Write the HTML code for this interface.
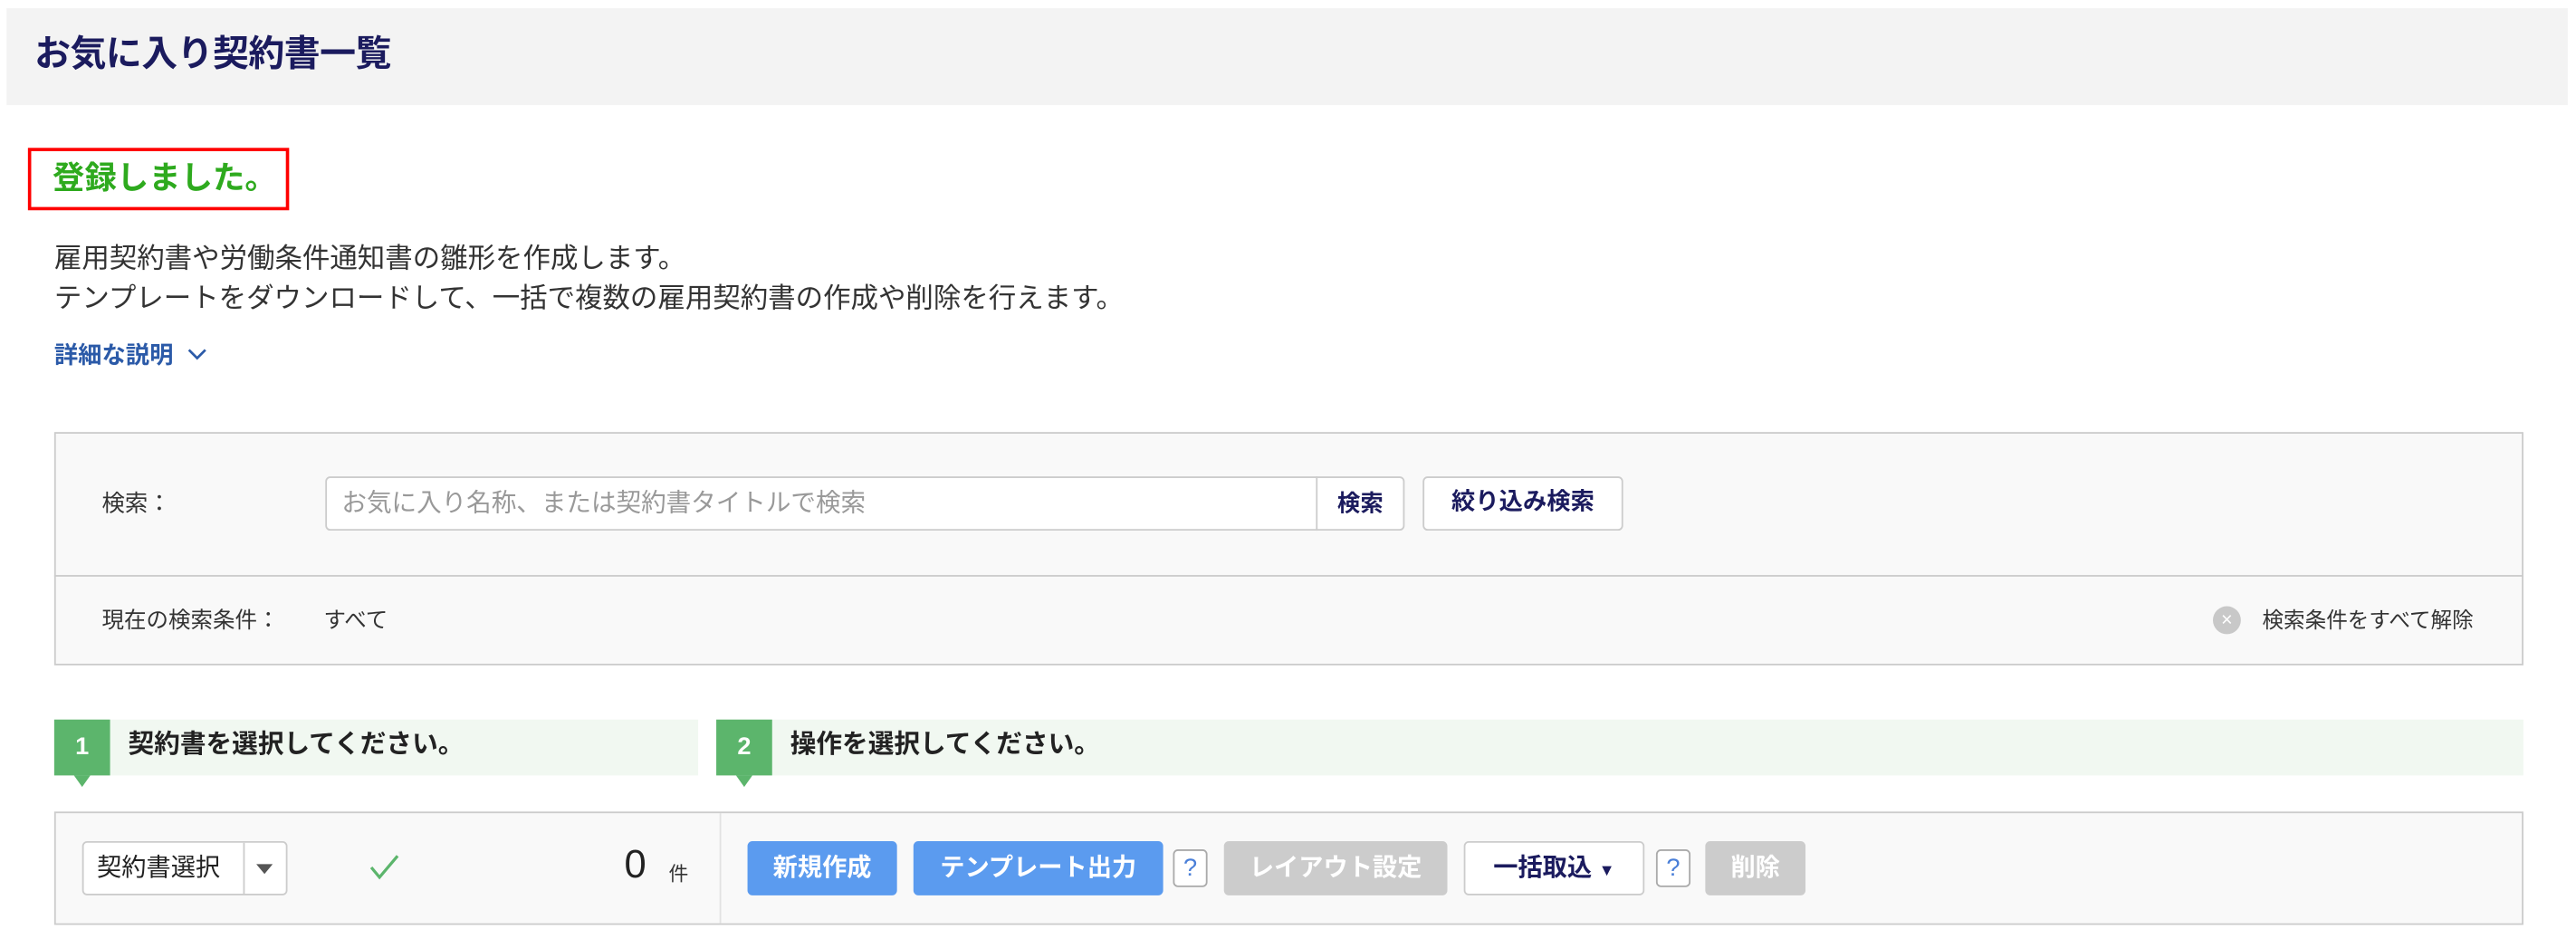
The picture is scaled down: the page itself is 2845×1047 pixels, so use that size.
<!DOCTYPE html>
<html><head><meta charset="utf-8"><style>
html,body{margin:0;padding:0;background:#fff;width:2845px;height:1047px;overflow:hidden}
#w{position:absolute;left:0;top:0;width:1568px;height:577px;transform:scale(1.81441);transform-origin:0 0;font-family:"Liberation Sans","Noto Sans CJK JP",sans-serif;color:#333}
.a{position:absolute;white-space:nowrap}
.btn{position:absolute;top:512px;height:33px;line-height:33px;border-radius:3px;font-size:15px;font-weight:bold;text-align:center;box-sizing:border-box}
.q{position:absolute;top:517px;width:21px;height:23px;border:1px solid #aaa;border-radius:3px;box-sizing:border-box;color:#4a7fd8;font-size:15px;text-align:center;line-height:21px;background:#fff}
</style></head><body><div id="w">
<div class="a" style="left:4px;top:5px;width:1559px;height:59px;background:#f3f3f3"></div>
<div class="a" style="left:21px;top:18px;font-size:22px;font-weight:bold;color:#1b1b5e;line-height:30px;letter-spacing:-0.3px">お気に入り契約書一覧</div>
<div class="a" style="left:17px;top:90px;width:159px;height:38px;border:2.5px solid #f00;box-sizing:border-box"></div>
<div class="a" style="left:32px;top:96px;font-size:19.5px;font-weight:bold;color:#2eaa1e;line-height:26px">登録しました。</div>
<div class="a" style="left:33px;top:146px;font-size:16.8px;line-height:24px;color:#333">雇用契約書や労働条件通知書の雛形を作成します。<br>テンプレートをダウンロードして、一括で複数の雇用契約書の作成や削除を行えます。</div>
<div class="a" style="left:33px;top:207px;font-size:14.5px;font-weight:bold;color:#2b5aa8;line-height:20px">詳細な説明 <svg width="12" height="10" viewBox="0 0 12 10" style="margin-left:4px"><path d="M1 2l5 5 5-5" fill="none" stroke="#2b5aa8" stroke-width="1.5"/></svg></div>

<div class="a" style="left:33px;top:263px;width:1503px;height:142px;background:#f9f9f9;border:1px solid #ccc;box-sizing:border-box"></div>
<div class="a" style="left:33px;top:350px;width:1503px;height:1px;background:#ccc"></div>
<div class="a" style="left:62px;top:297px;font-size:14px;line-height:18px">検索：</div>
<div class="a" style="left:198px;top:290px;width:657px;height:33px;background:#fff;border:1px solid #ccc;border-radius:3px;box-sizing:border-box"></div>
<div class="a" style="left:801px;top:290px;width:1px;height:33px;background:#ccc"></div>
<div class="a" style="left:208px;top:297px;font-size:15.2px;color:#999;line-height:19px">お気に入り名称、または契約書タイトルで検索</div>
<div class="a" style="left:801px;top:297px;width:54px;text-align:center;font-size:14px;font-weight:bold;color:#1b1b5e;line-height:19px">検索</div>
<div class="a" style="left:866px;top:290px;width:122px;height:33px;background:#fff;border:1px solid #ccc;border-radius:3px;box-sizing:border-box;text-align:center;font-size:14.5px;font-weight:bold;color:#1b1b5e;line-height:31px">絞り込み検索</div>
<div class="a" style="left:62px;top:369px;font-size:13.5px;line-height:17px">現在の検索条件：</div>
<div class="a" style="left:197px;top:369px;font-size:13.5px;line-height:17px">すべて</div>
<div class="a" style="left:1347px;top:369px;width:17px;height:17px;border-radius:50%;background:#c8c8c8;color:#fff;font-size:12px;text-align:center;line-height:17px">×</div>
<div class="a" style="left:1377px;top:369px;font-size:13px;line-height:17px">検索条件をすべて解除</div>

<div class="a" style="left:33px;top:438px;width:392px;height:34px;background:#f1f8f1"></div>
<div class="a" style="left:436px;top:438px;width:1100px;height:34px;background:#f1f8f1"></div>
<div class="a" style="left:33px;top:438px;width:34px;height:34px;background:#5cb56c;color:#fff;font-weight:bold;font-size:15px;text-align:center;line-height:34px">1</div>
<div class="a" style="left:45px;top:472px;width:0;height:0;border-left:5px solid transparent;border-right:5px solid transparent;border-top:7px solid #5cb56c"></div>
<div class="a" style="left:436px;top:438px;width:34px;height:34px;background:#5cb56c;color:#fff;font-weight:bold;font-size:15px;text-align:center;line-height:34px">2</div>
<div class="a" style="left:448px;top:472px;width:0;height:0;border-left:5px solid transparent;border-right:5px solid transparent;border-top:7px solid #5cb56c"></div>
<div class="a" style="left:78px;top:444px;font-size:15.8px;font-weight:bold;line-height:20px;color:#222">契約書を選択してください。</div>
<div class="a" style="left:481px;top:444px;font-size:15.8px;font-weight:bold;line-height:20px;color:#222">操作を選択してください。</div>

<div class="a" style="left:33px;top:494px;width:1503px;height:69px;background:#f9f9f9;border:1px solid #ccc;box-sizing:border-box"></div>
<div class="a" style="left:438px;top:495px;width:1px;height:67px;background:#e2e2e2"></div>
<div class="a" style="left:50px;top:512px;width:125px;height:33px;background:#fff;border:1px solid #ccc;border-radius:3px;box-sizing:border-box"></div>
<div class="a" style="left:148px;top:513px;width:1px;height:31px;background:#ccc"></div>
<div class="a" style="left:59px;top:519px;font-size:15px;line-height:19px;color:#222">契約書選択</div>
<div class="a" style="left:156px;top:526px;width:0;height:0;border-left:5px solid transparent;border-right:5px solid transparent;border-top:6px solid #555"></div>
<svg class="a" style="left:224px;top:519px" width="20" height="18" viewBox="0 0 20 18"><path d="M2 9l5 6L18 2" fill="none" stroke="#5cb56c" stroke-width="1.8"/></svg>
<div class="a" style="left:380px;top:512px;font-size:24px;line-height:30px;color:#222">0</div>
<div class="a" style="left:407px;top:524px;font-size:12px;line-height:16px">件</div>
<div class="btn" style="left:455px;width:91px;background:#5b9bef;color:#fff">新規作成</div>
<div class="btn" style="left:556px;width:152px;background:#5b9bef;color:#fff">テンプレート出力</div>
<div class="q" style="left:714px">?</div>
<div class="btn" style="left:745px;width:136px;background:#ccc;color:#fff">レイアウト設定</div>
<div class="btn" style="left:891px;width:110px;background:#fff;border:1px solid #ccc;color:#1b1b5e;line-height:31px">一括取込 <span style="font-size:10px">▼</span></div>
<div class="q" style="left:1008px">?</div>
<div class="btn" style="left:1038px;width:61px;background:#ccc;color:#fff">削除</div>
</div></body></html>
